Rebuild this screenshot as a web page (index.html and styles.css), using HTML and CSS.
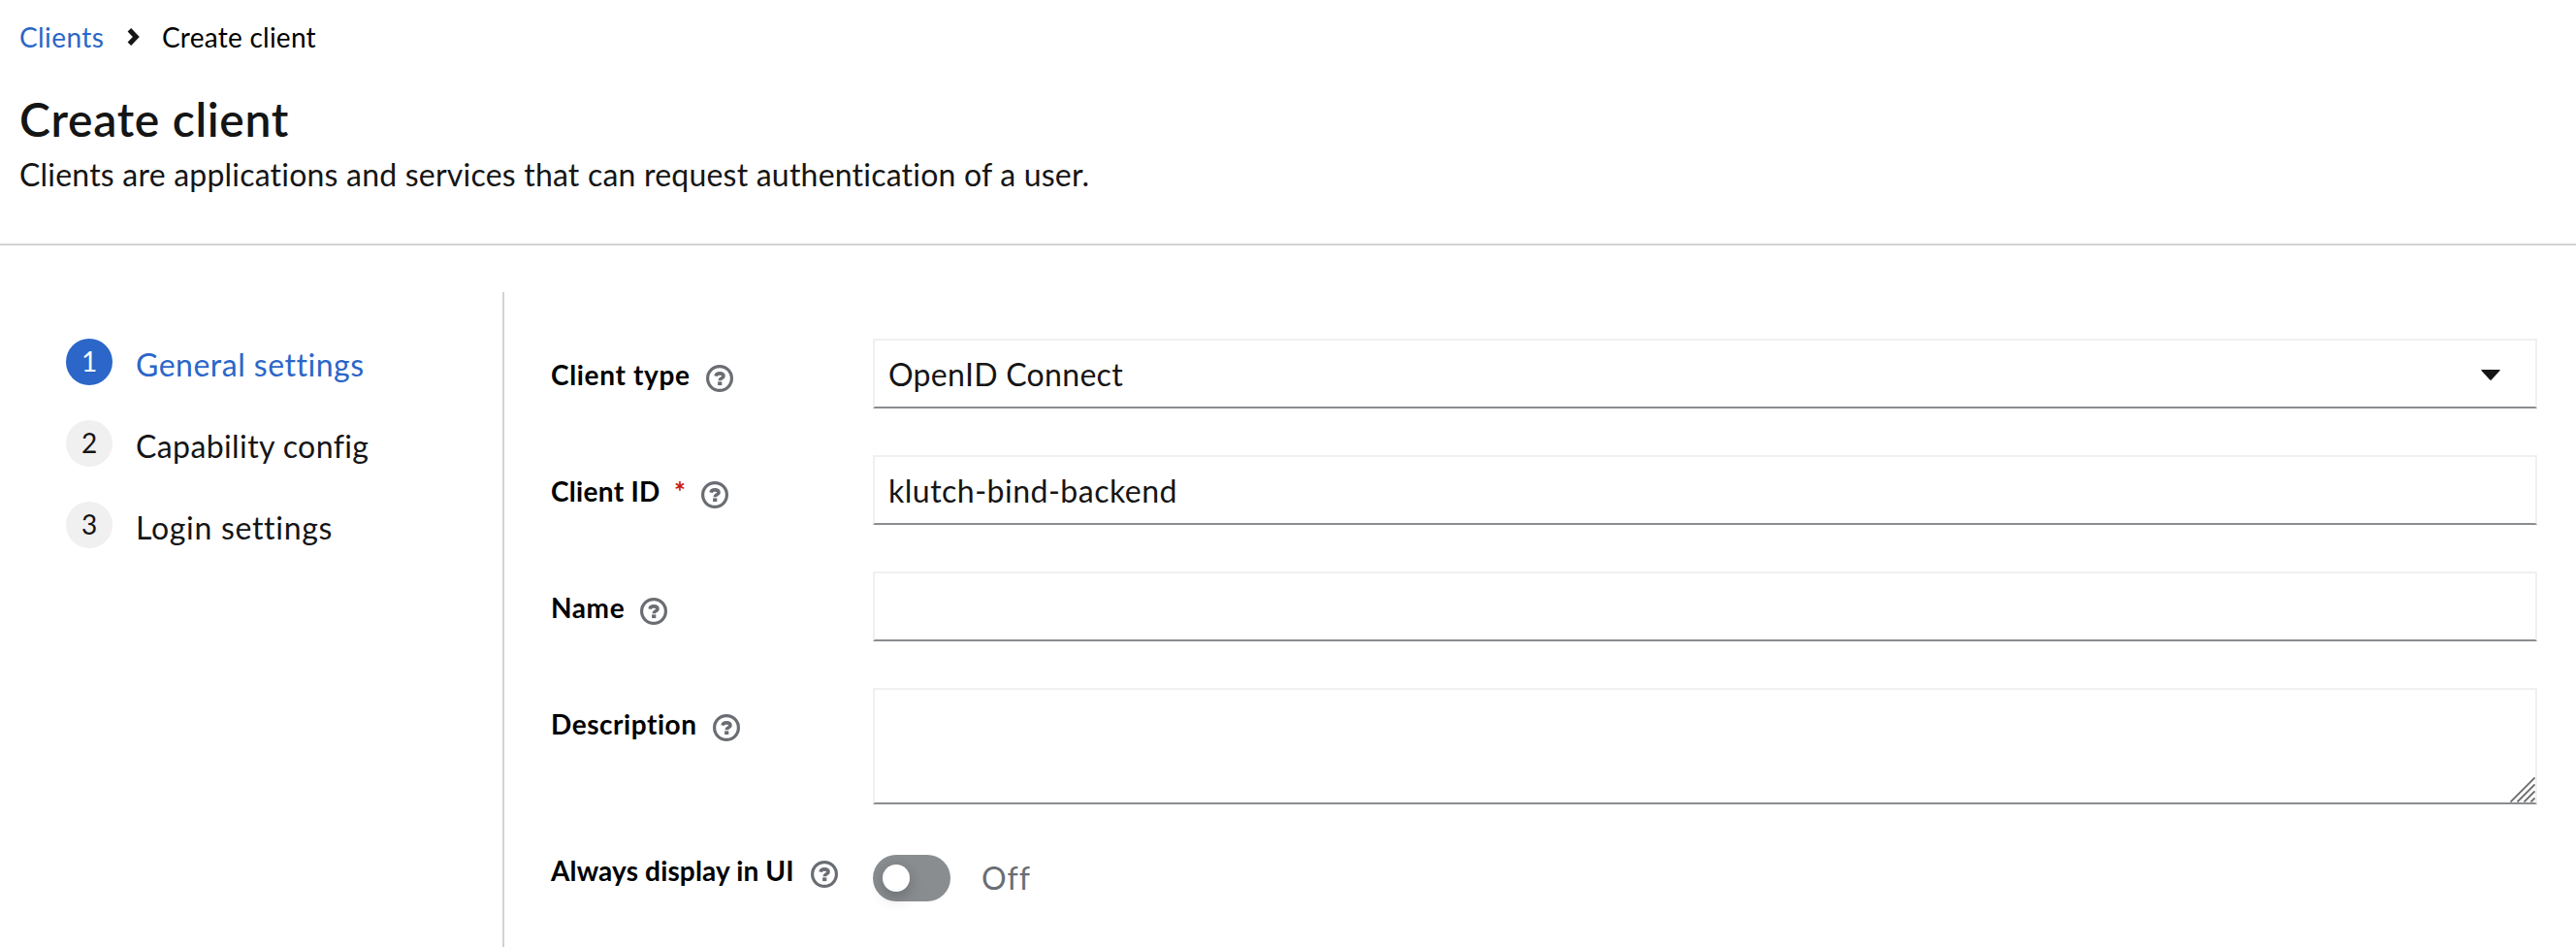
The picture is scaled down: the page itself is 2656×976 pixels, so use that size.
FILE: index.html
```html
<!DOCTYPE html>
<html lang="en">
<head>
<meta charset="utf-8">
<title>Create client</title>
<link rel="stylesheet" href="styles.css">
</head>
<body>
<svg width="0" height="0" class="defs" aria-hidden="true">
  <symbol id="help" viewBox="0 0 28 28">
    <circle cx="14" cy="14" r="12.4" fill="none" stroke="#6a6e73" stroke-width="3.2"/>
    <path d="M10 11.6C10.5 9.6 12 8.9 14 8.9c2.3 0 4 1 4 2.8 0 2.2-3.8 2-3.8 4.5" fill="none" stroke="#6a6e73" stroke-width="3.6"/>
    <rect x="12.1" y="17.4" width="4.2" height="3.7" fill="#6a6e73"/>
  </symbol>
</svg>
<header class="header">
  <nav class="breadcrumb">
    <a class="crumb-link" href="#">Clients</a>
    <svg class="chevron" width="14" height="20" viewBox="0 0 14 20"><path d="M2.4 2.8 9.3 10l-6.9 7.2" fill="none" stroke="#151515" stroke-width="5"/></svg>
    <span class="crumb-current">Create client</span>
  </nav>
  <h1 class="title">Create client</h1>
  <p class="subtitle">Clients are applications and services that can request authentication of a user.</p>
</header>
<main class="wizard">
  <ol class="steps">
    <li class="step current"><span class="num">1</span><span class="name general">General settings</span></li>
    <li class="step"><span class="num">2</span><span class="name">Capability config</span></li>
    <li class="step"><span class="num">3</span><span class="name login">Login settings</span></li>
  </ol>
  <form class="form">
    <div class="row">
      <div class="label"><span class="l-type">Client type</span><svg class="help"><use href="#help"/></svg></div>
      <div class="field select"><span class="v-openid">OpenID Connect</span><svg class="caret" width="20" height="11" viewBox="0 0 20 11"><path d="M1 0h18q1.3 0 .5 1L11 10.2q-1 1-2 0L.5 1Q-.3 0 1 0z" fill="#151515"/></svg></div>
    </div>
    <div class="row">
      <div class="label"><span class="l-id">Client ID</span><span class="required">*</span><svg class="help"><use href="#help"/></svg></div>
      <div class="field"><span class="v-klutch">klutch-bind-backend</span></div>
    </div>
    <div class="row">
      <div class="label"><span class="l-name">Name</span><svg class="help"><use href="#help"/></svg></div>
      <div class="field"></div>
    </div>
    <div class="row">
      <div class="label"><span class="l-desc">Description</span><svg class="help"><use href="#help"/></svg></div>
      <div class="field area"><svg width="26" height="26" viewBox="0 0 26 26"><path d="M.5 25.5 25.5.5M7.5 25.5l18-18M14.5 25.5l11-11M21.5 25.5l4-4" stroke="#6b6b6b" stroke-width="1.8"/></svg></div>
    </div>
    <div class="row switch-row">
      <div class="label"><span class="l-always">Always display in UI</span><svg class="help"><use href="#help"/></svg></div>
      <div class="switch"><span class="track"><span class="knob"></span></span><span class="off">Off</span></div>
    </div>
  </form>
</main>
</body>
</html>
```
FILE: styles.css
```css
* { box-sizing: border-box; }
body {
  margin: 0;
  height: 976px;
  overflow: hidden;
  display: flex;
  flex-direction: column;
  background: #fff;
  color: #151515;
  font-family: Lato, "Open Sans", sans-serif;
  font-size: 32px;
  line-height: 48px;
  font-variant-ligatures: none;
  white-space: nowrap;
}
.defs { position: absolute; }
.header {
  height: 253px;
  flex: none;
  padding: 17px 20px 0;
  border-bottom: 2px solid #d2d2d2;
}
.breadcrumb { display: flex; font-size: 28px; line-height: 42px; color: #000; }
.crumb-link { width: 111px; color: #2b66c8; text-decoration: none; letter-spacing: .4px; }
.chevron { margin-top: 11px; }
.crumb-current { margin-left: 22px; letter-spacing: .25px; }
.title { margin: 33px 0 0; font-size: 48px; line-height: 62px; font-weight: 600; letter-spacing: .7px; }
.subtitle { margin: 2px 0 0; letter-spacing: .21px; }

.wizard { flex: 1; display: flex; padding: 48px 40px 0 0; }
.steps {
  width: 520px;
  flex: none;
  margin: 0;
  padding: 48px 0 0 68px;
  list-style: none;
  border-right: 2px solid #d2d2d2;
}
.step { display: flex; height: 84px; }
.num {
  width: 48px;
  height: 48px;
  margin-right: 24px;
  border-radius: 50%;
  background: #f0f0f0;
  font-size: 28px;
  line-height: 47px;
  text-align: center;
}
.name { padding-top: 3px; letter-spacing: .4px; }
.general { letter-spacing: .5px; }
.login { letter-spacing: .7px; }
.current { color: #2b66c8; }
.current .num { background: #2b66c8; color: #fff; }

.form { flex: 1; padding: 48px 0 0 48px; display: flex; flex-direction: column; gap: 48px; }
.row { display: grid; grid-template-columns: 332px 1fr; }
.label {
  display: flex;
  align-items: flex-start;
  padding-top: 16px;
  color: #000;
  font-size: 28px;
  line-height: 42px;
  font-weight: 700;
}
.help { width: 28px; height: 28px; margin: 11px 0 0 16px; }
.required { margin-left: 15px; width: 12px; color: #c9190b; }
.l-type { width: 144px; letter-spacing: .65px; }
.l-id { width: 112px; letter-spacing: .3px; }
.l-name { width: 76px; letter-spacing: .6px; }
.l-desc { width: 151px; letter-spacing: .55px; }
.l-always { width: 252px; letter-spacing: .15px; }
.field {
  display: flex;
  justify-content: space-between;
  height: 72px;
  padding: 0 16px 0 14px;
  line-height: 69px;
  border: 2px solid #f0f0f0;
  border-bottom-color: #8a8d90;
}
.v-openid { letter-spacing: .3px; }
.v-klutch { letter-spacing: .5px; }
.caret { margin: 30px 20px 0 0; }
.area { height: 120px; padding: 0; justify-content: flex-end; align-items: flex-end; }
.switch-row .label { padding-top: 0; margin-top: -1px; }
.switch { display: flex; padding-top: 4px; }
.track { width: 80px; height: 48px; padding: 10px; border-radius: 24px; background: #8a8d90; }
.knob {
  display: block;
  width: 28px;
  height: 28px;
  border-radius: 50%;
  background: #fff;
  box-shadow: 0 8px 16px rgba(3, 3, 3, .16), 0 0 12px rgba(3, 3, 3, .08);
}
.off { margin-left: 32px; color: #6a6e73; letter-spacing: 1px; }
```
